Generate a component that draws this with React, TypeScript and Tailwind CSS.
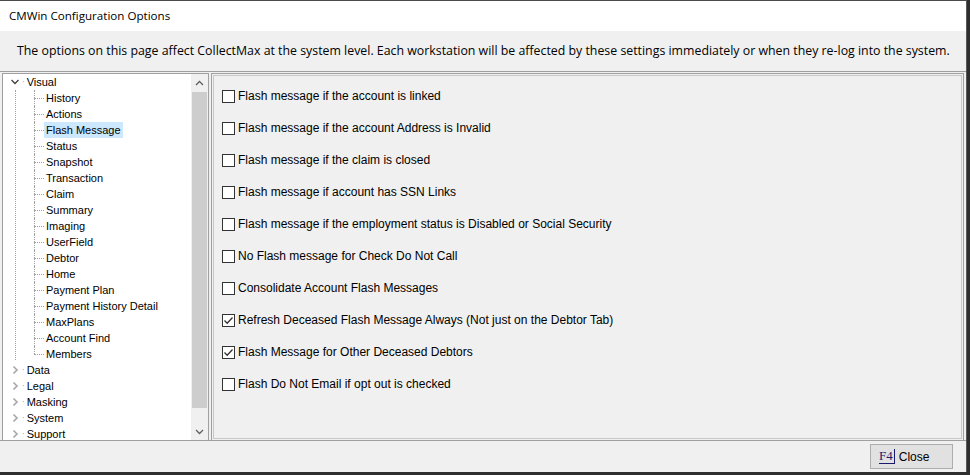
import React from "react";

const children = [
  "History",
  "Actions",
  "Flash Message",
  "Status",
  "Snapshot",
  "Transaction",
  "Claim",
  "Summary",
  "Imaging",
  "UserField",
  "Debtor",
  "Home",
  "Payment Plan",
  "Payment History Detail",
  "MaxPlans",
  "Account Find",
  "Members",
];

const roots = ["Data", "Legal", "Masking", "System", "Support"];

const options: { label: string; checked?: boolean }[] = [
  { label: "Flash message if the account is linked" },
  { label: "Flash message if the account Address is Invalid" },
  { label: "Flash message if the claim is closed" },
  { label: "Flash message if account has SSN Links" },
  { label: "Flash message if the employment status is Disabled or Social Security" },
  { label: "No Flash message for Check Do Not Call" },
  { label: "Consolidate Account Flash Messages" },
  { label: "Refresh Deceased Flash Message Always (Not just on the Debtor Tab)", checked: true },
  { label: "Flash Message for Other Deceased Debtors", checked: true },
  { label: "Flash Do Not Email if opt out is checked" },
];

function Chevron({ open }: { open?: boolean }) {
  return (
    <svg width="10" height="10" viewBox="0 0 10 10" className="shrink-0">
      {open ? (
        <path d="M1.5 3 L5 6.5 L8.5 3" fill="none" stroke="#404040" strokeWidth="1.3" />
      ) : (
        <path d="M3.5 1.5 L7 5 L3.5 8.5" fill="none" stroke="#a6a6a6" strokeWidth="1.6" />
      )}
    </svg>
  );
}

function Checkbox({ checked }: { checked?: boolean }) {
  return (
    <span className="w-[13px] h-[13px] border border-[#333] bg-white flex items-center justify-center shrink-0">
      {checked && (
        <svg width="11" height="11" viewBox="0 0 11 11">
          <path d="M1.5 5.5 L4.2 8.2 L9.5 2.5" fill="none" stroke="#333" strokeWidth="1.3" />
        </svg>
      )}
    </span>
  );
}

export default function App() {
  return (
    <div className="w-[970px] h-[475px] bg-[#2e2e2e] overflow-hidden" style={{ fontFamily: '"Liberation Sans", Arial, sans-serif' }}>
      <div className="w-[967px] h-[472px] border-t border-[#4a4a4a] border-r border-r-[#5a5a5a] bg-[#f0f0f0] flex flex-col">
        <div className="h-[30px] bg-white flex items-center pl-[9px] text-[11.6px] text-black" style={{ fontFamily: '"Open Sans", "Noto Sans", sans-serif' }}>
          CMWin Configuration Options
        </div>
        <div className="h-[41px] flex items-center pl-[17px] text-[12.35px] text-black whitespace-nowrap border-b border-[#a0a0a0]" style={{ fontFamily: '"Open Sans", "Noto Sans", sans-serif' }}>
          The options on this page affect CollectMax at the system level. Each workstation will be affected by these settings immediately or when they re-log into the system.
        </div>
        <div className="flex-1 flex pt-px pl-[2px] pr-[2px] gap-[2px] min-h-0">
          <div className="w-[207px] h-[368px] border border-[#a0a0a0] bg-white flex">
            <div className="flex-1 overflow-hidden text-[11px] text-black">
              <div className="h-4 flex items-center pl-[7px] gap-[2px]">
                <Chevron open />
                <span className="text-[#808080] text-[8px]">·</span>
                <span>Visual</span>
              </div>
              <div className="relative">
                <div className="absolute left-[12px] top-0 h-[270px] border-l border-dotted border-[#a0a0a0]" />
                {children.map((c, i) => (
                  <div key={c} className="h-4 flex items-center pl-[31px] relative">
                    {i < children.length - 1 ? (
                      <div className="absolute left-[31px] top-0 h-4 border-l border-dotted border-[#a0a0a0]" />
                    ) : (
                      <div className="absolute left-[31px] top-0 h-2 border-l border-dotted border-[#a0a0a0]" />
                    )}
                    <span className="w-[10px] border-t border-dotted border-[#a0a0a0] shrink-0" />
                    <span className={c === "Flash Message" ? "bg-[#cce8ff] px-[2px]" : "px-[2px]"}>{c}</span>
                  </div>
                ))}
              </div>
              {roots.map((r) => (
                <div key={r} className="h-4 flex items-center pl-[7px] gap-[2px]">
                  <Chevron />
                  <span className="text-[#808080] text-[8px]">·</span>
                  <span>{r}</span>
                </div>
              ))}
            </div>
            <div className="w-[17px] bg-[#f0f0f0] flex flex-col items-center">
              <div className="h-[17px] flex items-center justify-center">
                <svg width="9" height="6" viewBox="0 0 9 6">
                  <path d="M1 5 L4.5 1.5 L8 5" fill="none" stroke="#606060" strokeWidth="1.3" />
                </svg>
              </div>
              <div className="w-[15px] h-[316px] mt-px bg-[#cdcdcd]" />
              <div className="flex-1" />
              <div className="h-[17px] flex items-center justify-center">
                <svg width="9" height="6" viewBox="0 0 9 6">
                  <path d="M1 1 L4.5 4.5 L8 1" fill="none" stroke="#606060" strokeWidth="1.3" />
                </svg>
              </div>
            </div>
          </div>
          <div className="flex-1 h-[368px] border border-[#a0a0a0] p-px">
            <div className="h-full border border-[#c8c8c8] pt-[4px] pl-[8px] flex flex-col">
              {options.map((o) => (
                <div key={o.label} className="h-8 flex items-center gap-[3px] text-[12px] text-black">
                  <Checkbox checked={o.checked} />
                  <span>{o.label}</span>
                </div>
              ))}
            </div>
          </div>
        </div>
        <div className="h-[32px] border-t border-[#a0a0a0] flex items-center justify-end pr-[13px]">
          <button className="w-[83px] h-[25px] bg-[#e1e1e1] border border-[#adadad] flex items-center pl-[8px] gap-[4px] text-[12px] text-black">
            <span className="text-[13px] leading-[14px] text-[#1a1a6e] border-b border-r border-[#1a1a6e] pr-px" style={{ fontFamily: '"Liberation Serif", serif' }}>
              F4
            </span>
            <span>Close</span>
          </button>
        </div>
      </div>
    </div>
  );
}
